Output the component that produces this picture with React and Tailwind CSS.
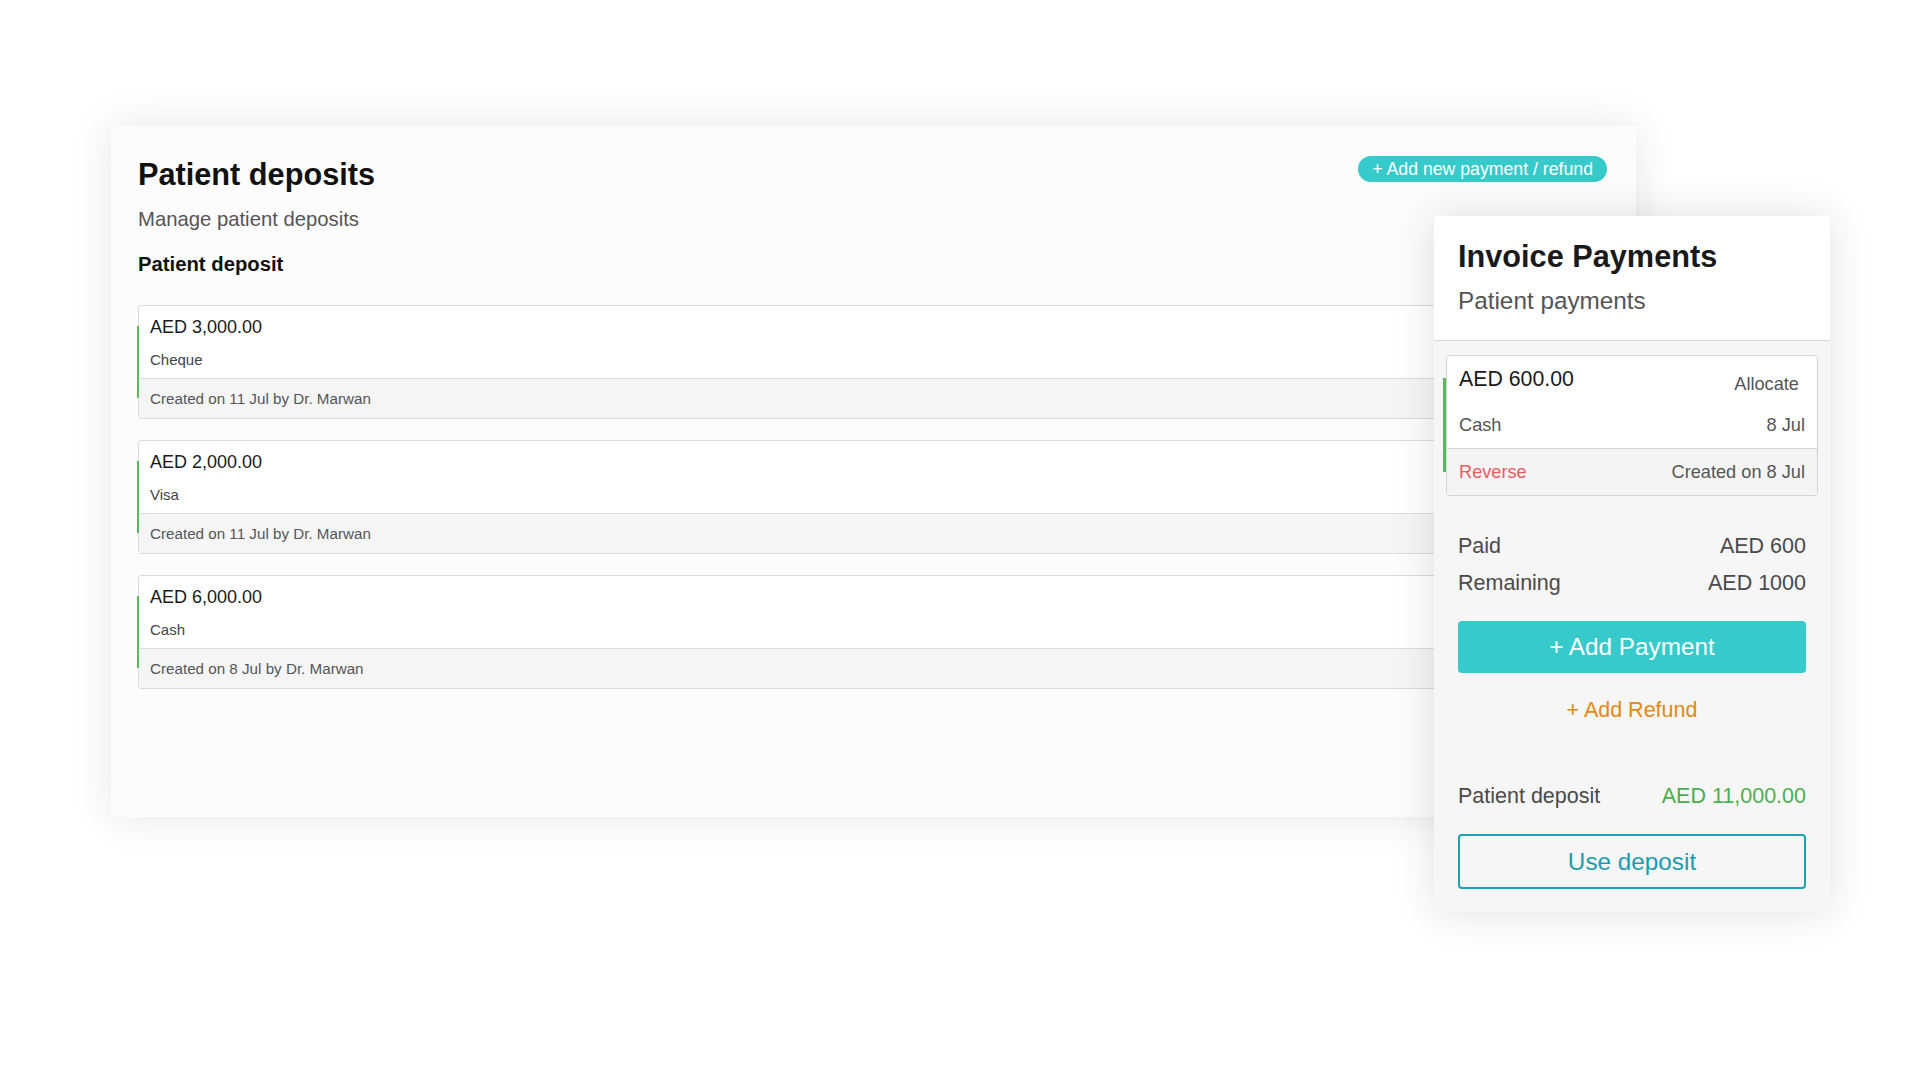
const deposits = [
  { amount: 'AED 3,000.00', method: 'Cheque', created: 'Created on 11 Jul by Dr. Marwan' },
  { amount: 'AED 2,000.00', method: 'Visa', created: 'Created on 11 Jul by Dr. Marwan' },
  { amount: 'AED 6,000.00', method: 'Cash', created: 'Created on 8 Jul by Dr. Marwan' },
];

const DepositItem = ({ deposit }) => (
  <div className="relative border border-[#dcdcdc] rounded-[3px] bg-white">
    {/* green accent */}
    <div className="absolute -left-[2px] top-[20px] bottom-[20px] w-[2px] bg-[#5cb85c]" />
    <div className="h-[72px] px-[11px] pt-[12px]">
      <div className="text-[18px] leading-[18px] text-[#1a1a1a]">{deposit.amount}</div>
      <div className="mt-[16px] text-[15px] leading-[15px] text-[#444]">{deposit.method}</div>
    </div>
    <div className="h-[40px] border-t border-[#dcdcdc] bg-[#f5f5f5] px-[11px] flex items-center">
      <span className="text-[15.2px] leading-[15px] text-[#555]">{deposit.created}</span>
    </div>
  </div>
);

const DepositsCard = () => (
  <div className="w-[1525px] h-[691px] bg-[#fcfcfc] shadow-[0_0_40px_rgba(0,0,0,0.1)] px-[27px] pt-[30px]">
    <div className="flex justify-between items-start">
      <div className="mt-[4px]">
        <h1 className="text-[30.7px] leading-[30px] font-bold text-[#111]">Patient deposits</h1>
      </div>
      <button className="mr-[2px] h-[26px] px-[14px] rounded-full bg-[#36caca] text-white text-[17.7px] leading-[26px]">
        + Add new payment / refund
      </button>
    </div>
    <div className="mt-[19px] text-[20.3px] leading-[20px] text-[#555]">Manage patient deposits</div>
    <div className="mt-[25px] text-[20.3px] leading-[20px] font-bold text-[#111]">Patient deposit</div>
    <div className="mt-[31px] flex flex-col gap-[21px]">
      {deposits.map((d, i) => (
        <DepositItem key={i} deposit={d} />
      ))}
    </div>
  </div>
);

const InvoicePanel = () => (
  <div className="w-[396px] bg-[#f6f6f6] shadow-[0_0_40px_rgba(0,0,0,0.12)]">
    {/* Header */}
    <div className="bg-white border-b border-[#dadada] px-[24px] pt-[26px] pb-[27px]">
      <h2 className="text-[30.7px] leading-[30px] font-bold text-[#1a1a1a]">Invoice Payments</h2>
      <div className="mt-[17px] text-[24.3px] leading-[24px] text-[#555]">Patient payments</div>
    </div>

    <div className="px-[12px] pt-[14px] pb-[23px]">
      {/* Payment card */}
      <div className="relative border border-[#d4d4d4] rounded-[4px] bg-white">
        <div className="absolute -left-[4px] top-[22px] bottom-[23px] w-[3px] bg-[#5cb85c]" />
        <div className="h-[92px] pl-[12px] pr-[12px] pt-[13px]">
          <div className="flex justify-between items-start">
            <span className="text-[21.3px] leading-[21px] text-[#1a1a1a]">AED 600.00</span>
            <span className="mt-[6px] mr-[6px] text-[18.2px] leading-[18px] text-[#555]">Allocate</span>
          </div>
          <div className="mt-[23px] flex justify-between text-[18.2px] leading-[18px] text-[#555]">
            <span>Cash</span>
            <span>8 Jul</span>
          </div>
        </div>
        <div className="h-[47px] border-t border-[#d4d4d4] bg-[#f4f4f4] rounded-b-[4px] px-[12px] flex items-center justify-between text-[18.2px] leading-[18px]">
          <span className="text-[#ec5a60]">Reverse</span>
          <span className="text-[#555]">Created on 8 Jul</span>
        </div>
      </div>

      <div className="px-[12px]">
        <div className="mt-[40px] flex justify-between text-[21.5px] leading-[21px] text-[#4a4a4a]">
          <span>Paid</span>
          <span>AED 600</span>
        </div>
        <div className="mt-[16px] flex justify-between text-[21.5px] leading-[21px] text-[#4a4a4a]">
          <span>Remaining</span>
          <span>AED 1000</span>
        </div>

        <button className="mt-[27px] w-full h-[52px] rounded-[4px] bg-[#36caca] text-white text-[24.3px] leading-[24px]">
          + Add Payment
        </button>

        <div className="mt-[27px] text-center text-[21.5px] leading-[21px] text-[#e5890f]">+ Add Refund</div>

        <div className="mt-[65px] flex justify-between text-[21.5px] leading-[21px]">
          <span className="text-[#4a4a4a]">Patient deposit</span>
          <span className="text-[#4cae4f]">AED 11,000.00</span>
        </div>

        <button className="mt-[27px] w-full h-[55px] rounded-[4px] border-2 border-[#1ba1b5] bg-transparent text-[#1a9cb0] text-[24.3px] leading-[24px]">
          Use deposit
        </button>
      </div>
    </div>
  </div>
);

export default function App() {
  return (
    <div
      className="relative w-[1920px] h-[1080px] overflow-hidden bg-white"
      style={{ fontFamily: '"Liberation Sans", Arial, sans-serif' }}
    >
      <div className="pt-[126px] pl-[111px]">
        <DepositsCard />
      </div>
      {/* overlay panel */}
      <div className="absolute left-[1434px] top-[216px]">
        <InvoicePanel />
      </div>
    </div>
  );
}
